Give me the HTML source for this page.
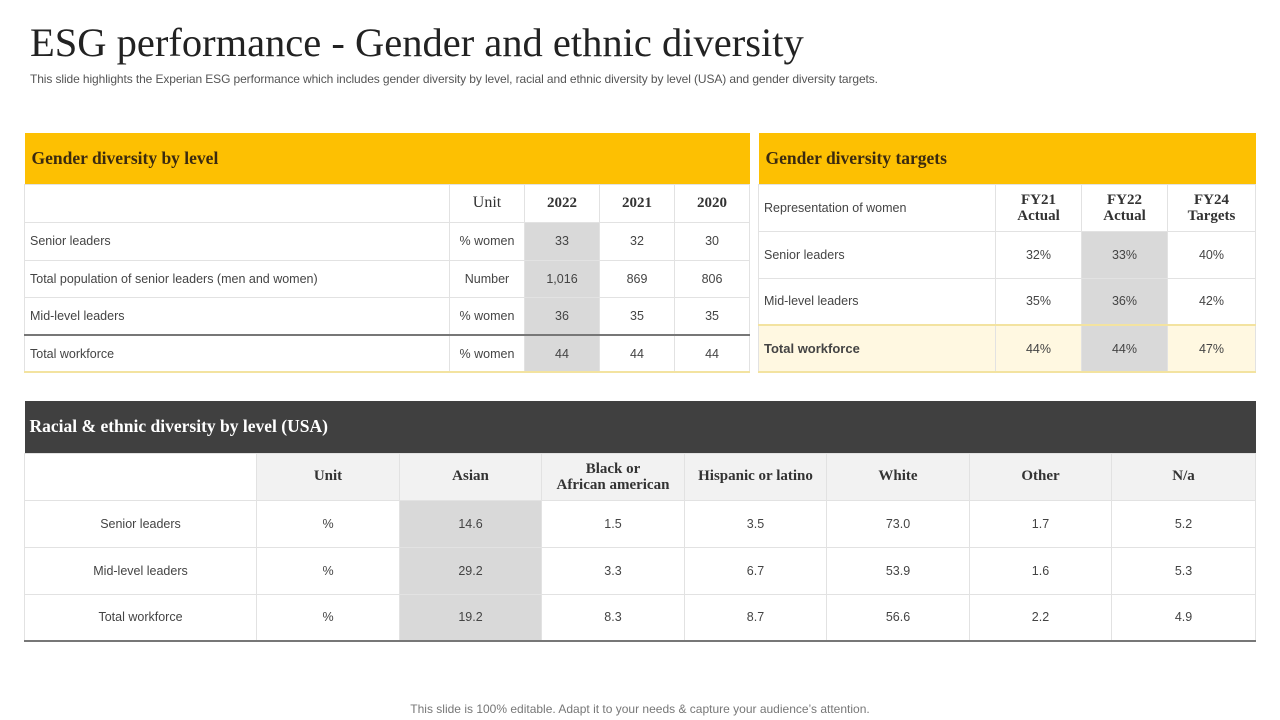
<!DOCTYPE html>
<html><head><meta charset="utf-8"><style>
body{margin:0;width:1280px;height:720px;background:#fff;position:relative;overflow:hidden;font-family:"Liberation Sans",sans-serif;color:#333}
h1{position:absolute;left:30px;top:19px;margin:0;font-family:"Liberation Serif",serif;font-weight:normal;font-size:40.5px;color:#222}
.sub{position:absolute;left:30px;top:72px;font-size:12px;color:#555;letter-spacing:-0.1px}
.foot{position:absolute;left:0;width:1280px;top:702px;text-align:center;font-size:12px;color:#777}
table{position:absolute;border-collapse:collapse;table-layout:fixed;font-size:12.5px;color:#444}
td{border:1px solid #e2e2e2;text-align:center;padding:0;overflow:hidden}
td.l{text-align:left;padding-left:5px}
.hd td{background:#fdc002;border:none;text-align:left;font-family:"Liberation Serif",serif;font-weight:bold;font-size:17.5px;color:#3a2a10;padding-left:7px}
.s{font-family:"Liberation Serif",serif;font-weight:bold;font-size:15px;color:#333}
.g{background:#d9d9d9}
.dk td{background:#404040;color:#fff;border:none;text-align:left;font-family:"Liberation Serif",serif;font-weight:bold;font-size:17.5px;padding-left:5px}
.gr td.s{background:#f2f2f2}
</style></head><body>
<h1>ESG performance - Gender and ethnic diversity</h1>
<div class="sub">This slide highlights the Experian ESG performance which includes gender diversity by level, racial and ethnic diversity by level (USA) and gender diversity targets.</div>

<table style="left:24px;top:133px;width:725px">
<col style="width:425px"><col style="width:75px"><col style="width:75px"><col style="width:75px"><col style="width:75px">
<tr class="hd" style="height:51px"><td colspan="5">Gender diversity by level</td></tr>
<tr style="height:38px"><td></td><td class="s" style="font-weight:normal;font-size:16px">Unit</td><td class="s">2022</td><td class="s">2021</td><td class="s">2020</td></tr>
<tr style="height:38px"><td class="l">Senior leaders</td><td>% women</td><td class="g">33</td><td>32</td><td>30</td></tr>
<tr style="height:37px"><td class="l">Total population of senior leaders (men and women)</td><td>Number</td><td class="g">1,016</td><td>869</td><td>806</td></tr>
<tr style="height:38px"><td class="l">Mid-level leaders</td><td>% women</td><td class="g">36</td><td>35</td><td>35</td></tr>
<tr style="height:37px;border-top:2px solid #777;border-bottom:2px solid #f3e3a0"><td class="l">Total workforce</td><td>% women</td><td class="g">44</td><td>44</td><td>44</td></tr>
</table>

<table style="left:758px;top:133px;width:497px">
<col style="width:237px"><col style="width:86px"><col style="width:86px"><col style="width:88px">
<tr class="hd" style="height:51px"><td colspan="4">Gender diversity targets</td></tr>
<tr style="height:47px"><td class="l">Representation of women</td><td class="s" style="line-height:16px">FY21<br>Actual</td><td class="s" style="line-height:16px">FY22<br>Actual</td><td class="s" style="line-height:16px">FY24<br>Targets</td></tr>
<tr style="height:47px"><td class="l">Senior leaders</td><td>32%</td><td class="g">33%</td><td>40%</td></tr>
<tr style="height:47px"><td class="l">Mid-level leaders</td><td>35%</td><td class="g">36%</td><td>42%</td></tr>
<tr style="height:47px;background:#fff8e1;border-top:2px solid #f3e3a0;border-bottom:2px solid #f3e3a0"><td class="l" style="font-weight:bold;font-size:13px">Total workforce</td><td>44%</td><td class="g">44%</td><td>47%</td></tr>
</table>

<table style="left:24px;top:401px;width:1231px">
<col style="width:232px"><col style="width:143px"><col style="width:142px"><col style="width:143px"><col style="width:142px"><col style="width:143px"><col style="width:142px"><col style="width:144px">
<tr class="dk" style="height:52px"><td colspan="8">Racial &amp; ethnic diversity by level (USA)</td></tr>
<tr class="gr" style="height:47px"><td></td><td class="s">Unit</td><td class="s">Asian</td><td class="s" style="line-height:16px">Black or<br>African american</td><td class="s">Hispanic or latino</td><td class="s">White</td><td class="s">Other</td><td class="s">N/a</td></tr>
<tr style="height:47px"><td>Senior leaders</td><td>%</td><td class="g">14.6</td><td>1.5</td><td>3.5</td><td>73.0</td><td>1.7</td><td>5.2</td></tr>
<tr style="height:47px"><td>Mid-level leaders</td><td>%</td><td class="g">29.2</td><td>3.3</td><td>6.7</td><td>53.9</td><td>1.6</td><td>5.3</td></tr>
<tr style="height:47px;border-bottom:2px solid #777"><td>Total workforce</td><td>%</td><td class="g">19.2</td><td>8.3</td><td>8.7</td><td>56.6</td><td>2.2</td><td>4.9</td></tr>
</table>

<div class="foot">This slide is 100% editable. Adapt it to your needs &amp; capture your audience’s attention.</div>
</body></html>
